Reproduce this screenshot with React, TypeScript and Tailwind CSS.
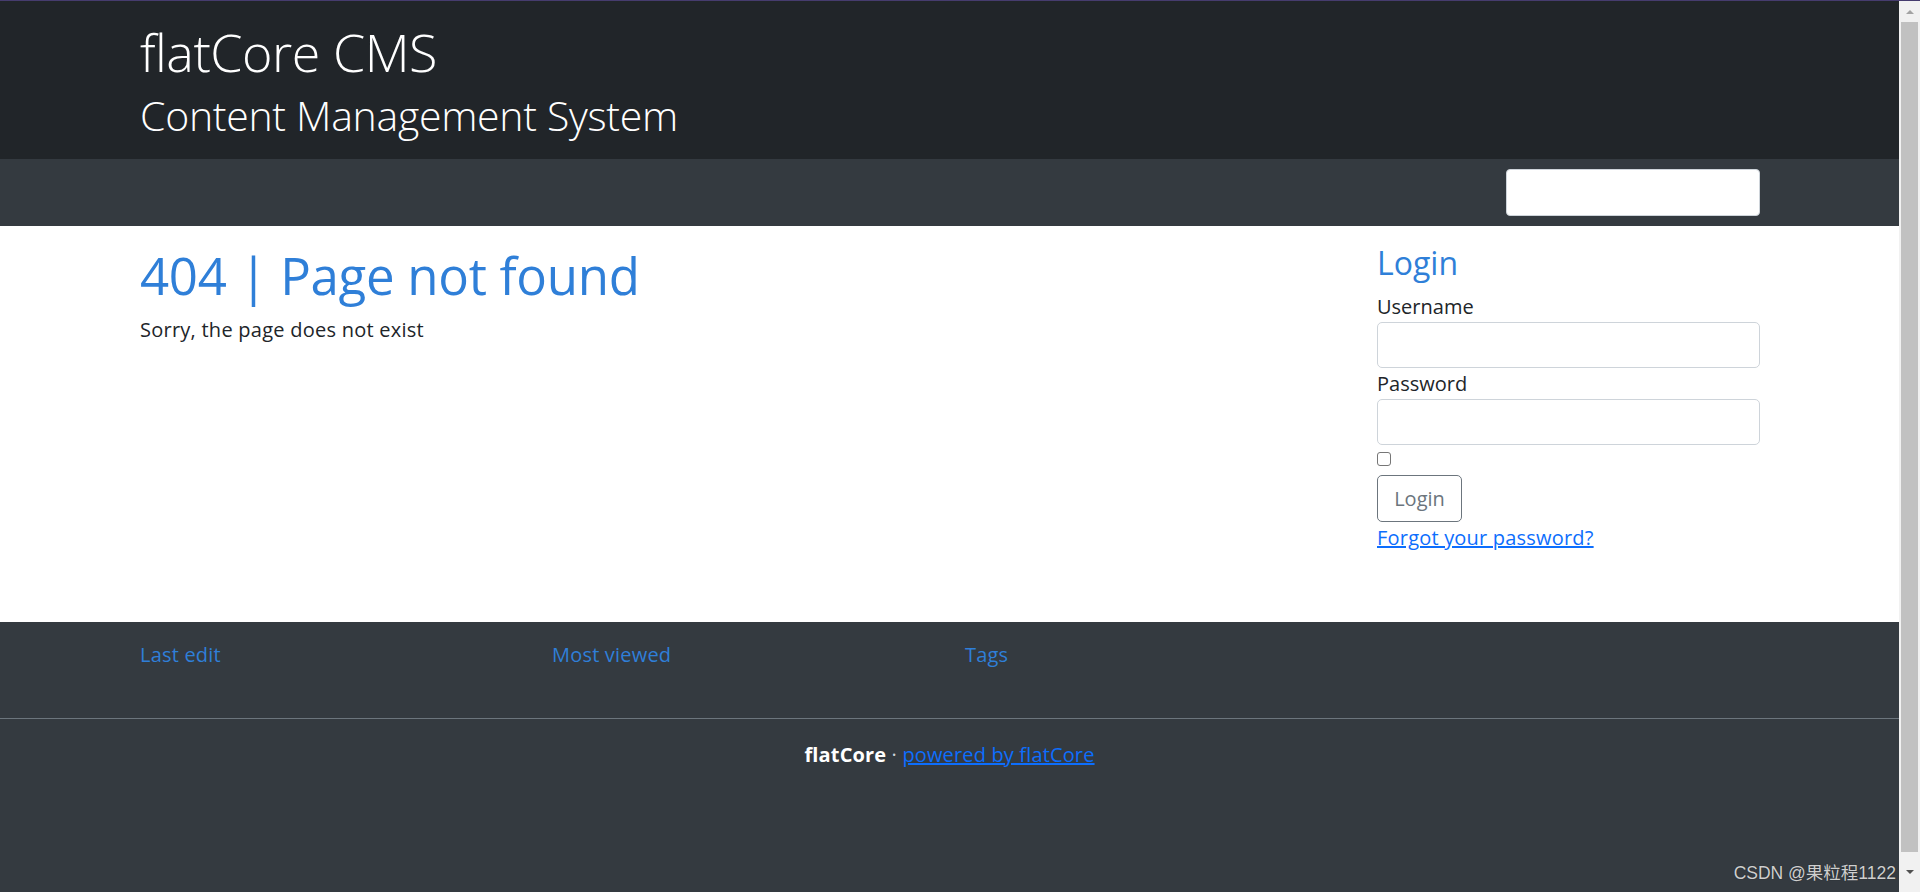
import React from "react";

const font = { fontFamily: '"Open Sans", "Noto Sans", sans-serif' };

export default function App() {
  return (
    <div className="relative h-[892px] w-[1920px] overflow-hidden bg-white" style={font}>
      <div className="h-px w-full bg-[#463c6e]" />
      <div className="flex h-[891px]">
        <div className="flex min-w-0 flex-1 flex-col">
          {/* Header */}
          <header className="h-[158px] bg-[#212529] pl-[140px] pt-[21px] text-white">
            <div className="text-[52px] font-light leading-[60px] tracking-[-0.5px]">flatCore CMS</div>
            <div className="mt-[9px] text-[41px] font-light leading-[48px] tracking-[-0.3px]">Content Management System</div>
          </header>
          {/* Nav */}
          <nav className="flex h-[67px] justify-end bg-[#343a40] pr-[139px] pt-[10px]">
            <div className="h-[47px] w-[254px] rounded-[4px] border border-[#ced4da] bg-white" />
          </nav>
          {/* Main */}
          <main className="flex h-[396px] bg-white pl-[140px] pr-[139px] text-[#212529]">
            <div className="flex-1 pt-[19px]">
              <h1 className="text-[51px] leading-[60px] tracking-[-0.3px] text-[#2f7fd8]">404 | Page not found</h1>
              <p className="mt-[11px] text-[20px] leading-[27px] tracking-[0.25px]">Sorry, the page does not exist</p>
            </div>
            <div className="w-[383px] pt-[18px]">
              <h3 className="text-[32px] leading-[38px] text-[#2f7fd8]">Login</h3>
              <label className="mt-[11px] block text-[20px] leading-[27px]">Username</label>
              <div className="mt-[2px] h-[46px] w-full rounded-[5px] border border-[#ced4da] bg-white" />
              <label className="mt-[2px] block text-[20px] leading-[27px]">Password</label>
              <div className="mt-[2px] h-[46px] w-full rounded-[5px] border border-[#ced4da] bg-white" />
              <div className="mt-[7px] h-[14px] w-[14px] rounded-[3px] border border-[#767676] bg-white" />
              <button className="mt-[9px] flex h-[47px] w-[85px] items-center justify-center rounded-[5px] border border-[#6c757d] text-[20px] text-[#6c757d]">
                Login
              </button>
              <a className="mt-[2px] block text-[20px] leading-[27px] tracking-[0.2px] text-[#0d6efd] underline">Forgot your password?</a>
            </div>
          </main>
          {/* Footer */}
          <footer className="flex-1 bg-[#343a40]">
            <div className="grid h-[96px] grid-cols-[412px_413px_1fr] pl-[140px] pt-[19px] text-[20px] leading-[27px] tracking-[0.2px] text-[#2f7fd8]">
              <div>Last edit</div>
              <div>Most viewed</div>
              <div>Tags</div>
            </div>
            <div className="h-px w-full bg-[#6c757d]" />
            <div className="pt-[22px] text-center text-[20px] leading-[27px] tracking-[0.15px] text-white">
              <span className="font-bold">flatCore</span>
              <span className="text-[#ced4da]"> · </span>
              <a className="text-[#0d6efd] underline">powered by flatCore</a>
            </div>
          </footer>
        </div>
        {/* Scrollbar */}
        <div className="flex w-[21px] flex-col items-center bg-[#f1f1f1]">
          <div className="flex h-[21px] items-center justify-center">
            <div className="h-0 w-0 border-x-[4px] border-b-[4px] border-x-transparent border-b-[#a3a3a3]" />
          </div>
          <div className="h-[830px] w-[17px] bg-[#c1c1c1]" />
          <div className="flex flex-1 items-center justify-center">
            <div className="h-0 w-0 border-x-[4px] border-t-[4px] border-x-transparent border-t-[#505050]" />
          </div>
        </div>
      </div>
      <div
        className="absolute bottom-[6px] right-[24px] text-[17.5px] text-[#cfcfcf]"
        style={{ fontFamily: '"Liberation Sans", "Noto Sans CJK SC", sans-serif', textShadow: "0 0 1px rgba(0,0,0,0.5)" }}
      >
        CSDN @果粒程1122
      </div>
    </div>
  );
}
